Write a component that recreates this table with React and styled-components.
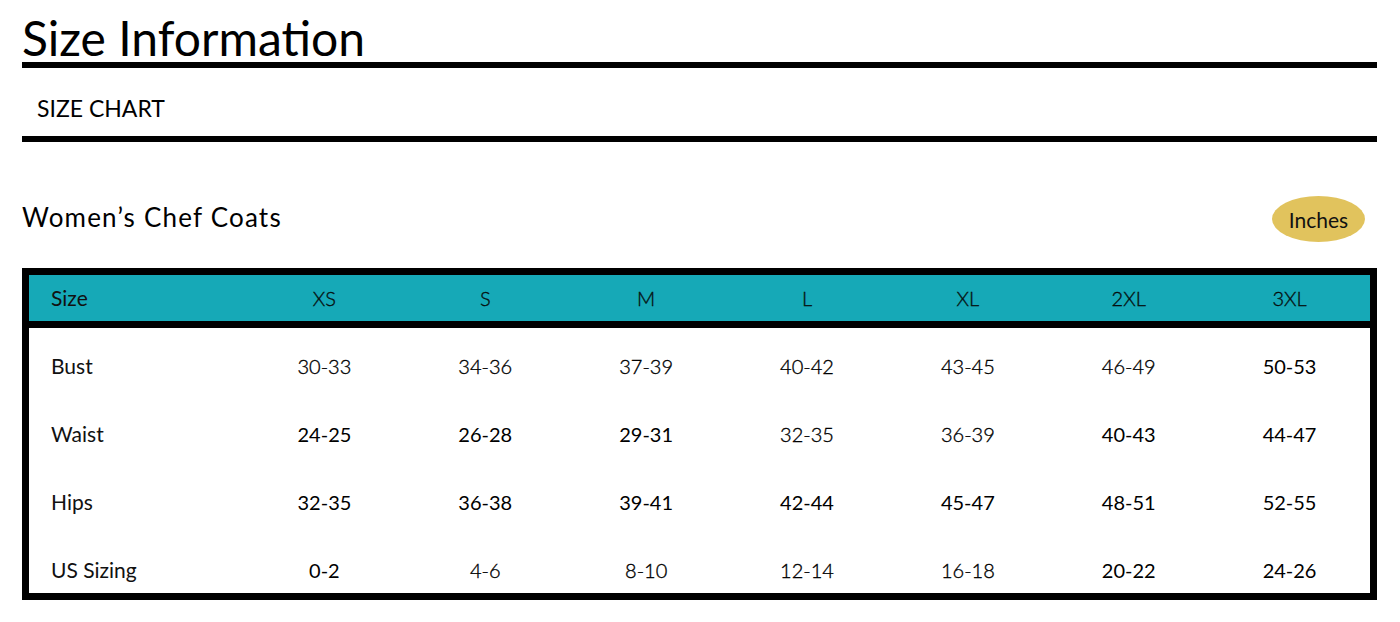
import React from "react";
import styled, { createGlobalStyle } from "styled-components";

const Global = createGlobalStyle`
  html, body { margin: 0; padding: 0; background: #fff; }
  body { font-family: Lato, "Noto Sans", sans-serif; color: #111; }
`;

const Page = styled.div`
  width: 1355px;
  margin-left: 22px;
`;

const Title = styled.h1`
  margin: 0;
  padding-top: 14px;
  font-size: 48px;
  line-height: 48px;
  font-weight: 400;
  color: #000;
  border-bottom: 6px solid #000;
`;

const Tab = styled.div`
  padding: 26px 0 14px 15px;
  font-size: 23px;
  line-height: 28px;
  color: #000;
  border-bottom: 6px solid #000;
`;

const SectionHead = styled.div`
  display: flex;
  align-items: center;
  justify-content: space-between;
  height: 46px;
  margin: 54px 12px 26px 0;
`;

const SectionTitle = styled.h2`
  margin: 0 0 4px;
  font-size: 26px;
  letter-spacing: 1.2px;
  font-weight: 400;
  color: #000;
`;

const Unit = styled.div`
  width: 93px;
  height: 46px;
  border-radius: 50%;
  background: #e1c35d;
  display: flex;
  align-items: center;
  justify-content: center;
  font-size: 21px;
  color: #111;
`;

const Table = styled.div`
  border: 7px solid #000;
  height: 332px;
  box-sizing: border-box;
  display: flex;
  flex-direction: column;
`;

const Row = styled.div`
  display: grid;
  grid-template-columns: 215px repeat(7, 1fr);
  align-items: center;
  ${(p) =>
    p.$head
      ? `
    height: 46px;
    background: #16a9b7;
    border-bottom: 7px solid #000;
  `
      : `
    height: 68px;
    align-items: start;
    padding-top: 27px;
    box-sizing: border-box;
    &:last-child { height: 61px; }
  `}
`;

const Label = styled.div`
  padding-left: 22px;
  font-size: 21px;
  line-height: 22px;
  color: #111;
`;

const Cell = styled.div`
  text-align: center;
  font-size: 20px;
  line-height: 22px;
  font-weight: ${(p) => (p.$light ? 300 : 400)};
  -webkit-text-stroke: ${(p) => (p.$light ? "0.35px #000" : "0")};
  color: #000;
`;

const HeadCell = styled(Cell)`
  color: #0c1f22;
`;

const sizes = ["XS", "S", "M", "L", "XL", "2XL", "3XL"];

const rows = [
  { label: "Bust", values: ["30-33", "34-36", "37-39", "40-42", "43-45", "46-49", "50-53"], light: [1, 1, 1, 1, 1, 1, 0] },
  { label: "Waist", values: ["24-25", "26-28", "29-31", "32-35", "36-39", "40-43", "44-47"], light: [0, 0, 0, 1, 1, 0, 0] },
  { label: "Hips", values: ["32-35", "36-38", "39-41", "42-44", "45-47", "48-51", "52-55"], light: [0, 0, 0, 0, 0, 0, 0] },
  { label: "US Sizing", values: ["0-2", "4-6", "8-10", "12-14", "16-18", "20-22", "24-26"], light: [0, 1, 1, 1, 1, 0, 0] },
];

export default function App() {
  return (
    <>
      <Global />
      <Page>
        <Title>Size Information</Title>
        <Tab>SIZE CHART</Tab>
        <SectionHead>
          <SectionTitle>Women’s Chef Coats</SectionTitle>
          <Unit>Inches</Unit>
        </SectionHead>
        <Table>
          <Row $head>
            <Label>Size</Label>
            {sizes.map((s) => (
              <HeadCell key={s} $light>{s}</HeadCell>
            ))}
          </Row>
          {rows.map((r) => (
            <Row key={r.label}>
              <Label>{r.label}</Label>
              {r.values.map((v, i) => (
                <Cell key={i} $light={!!r.light[i]}>{v}</Cell>
              ))}
            </Row>
          ))}
        </Table>
      </Page>
    </>
  );
}
